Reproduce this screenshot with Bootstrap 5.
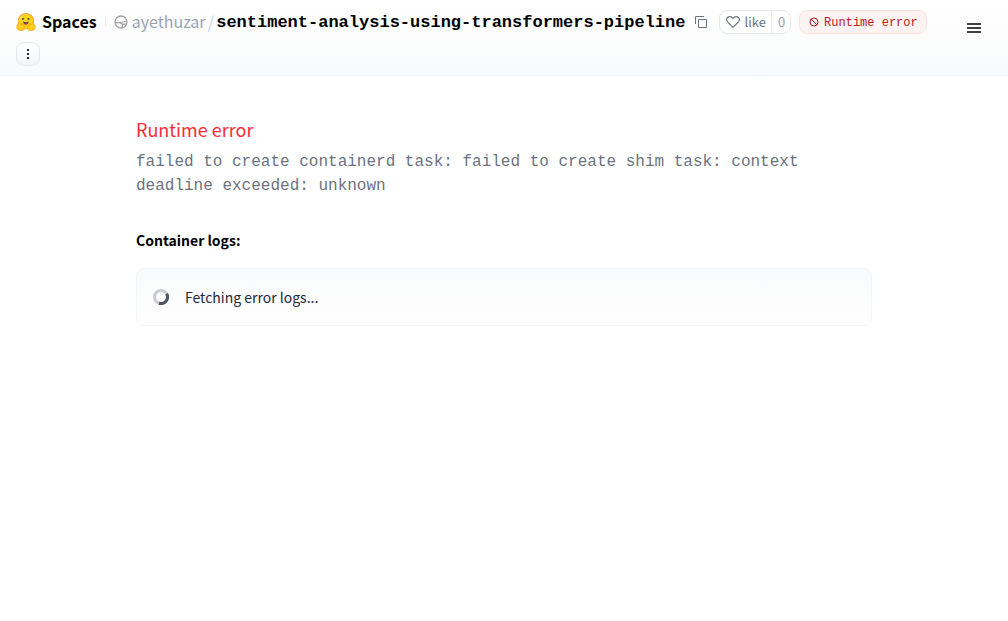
<!DOCTYPE html>
<html lang="en">
<head>
<meta charset="utf-8">
<meta name="viewport" content="width=device-width, initial-scale=1">
<title>sentiment-analysis-using-transformers-pipeline</title>
<link href="https://cdn.jsdelivr.net/npm/bootstrap@5.3.0/dist/css/bootstrap.min.css" rel="stylesheet">
<style>
  body { font-family: "Noto Sans CJK SC", "Noto Sans", sans-serif; font-size: 14px; line-height: 24px; color: #1f2937; }
  svg { display: block; flex-shrink: 0; }
  .mono { font-family: "Liberation Mono", monospace; }
  .space-header { background: linear-gradient(to top, #f9fafb, #fff); border-bottom: 1px solid #f3f4f6; padding: 10px 16px 9px; }
  .space-bar { row-gap: 8px; min-width: 0; }
  .space-bar a { text-decoration: none; }
  .brand { color: #000; font-size: 16px; font-weight: 700; gap: 6px; }
  .brand span, .owner { line-height: 22px; padding-bottom: 2px; }
  .divider { width: 1px; height: 8px; background: #e5e7eb; margin: 0 8px; }
  .owner { color: #9ca3af; font-size: 16px; margin-left: 4px; }
  .slash { color: #d1d5db; font-size: 17px; margin: 0 2px; }
  .space-name { color: #000; font-size: 17px; line-height: 22px; padding-top: 2px; font-weight: 700; }
  .bare-btn { border: 0; background: none; padding: 0; color: #6b7280; }
  .copy-btn { margin-left: 10px; }
  .like-box { height: 24px; border: 1px solid #e5e7eb; border-radius: 8px; background: #fff; font-size: 13px; line-height: 22px; margin: 0 8px 0 12px; overflow: hidden; }
  .like-box button { border: 0; background: none; padding: 0 5px 0 6px; color: #6b7280; }
  .like-box .count { border-left: 1px solid #e5e7eb; color: #9ca3af; }
  .status { height: 24px; border: 1px solid #fee2e2; border-radius: 8px; background: #fef2f2; color: #b91c1c; font-size: 12px; padding: 0 8px 0 9px; gap: 5px; margin-right: 8px; }
  .status span { line-height: 20px; padding-top: 2px; }
  .more-btn { width: 24px; height: 24px; border: 1px solid #e5e7eb; border-radius: 8px; background: linear-gradient(#fff, #f3f4f6); color: #1f2937; padding: 0; }
  .menu-btn { width: 36px; height: 36px; color: #374151; }
  .space-main { max-width: 768px; padding: 40px 16px; }
  .error-title { color: #fb2c36; font-size: 18px; line-height: 26px; margin-bottom: 8px; }
  .error-text { color: #6b7280; font-size: 16px; line-height: 24px; margin-bottom: 30px; }
  .logs-title { color: #000; font-size: 14px; line-height: 24px; font-weight: 700; margin-bottom: 16px; }
  .logs-box { border: 1px solid #f3f4f6; border-radius: 8px; background: linear-gradient(#f9fafb, #fff); padding: 16px; gap: 16px; }
</style>
</head>
<body>
<header class="space-header d-flex align-items-start justify-content-between">
  <div class="space-bar d-flex flex-wrap align-items-center flex-grow-1">
    <a href="#" class="brand d-flex align-items-center">
      <svg width="20" height="20" viewBox="0 0 95 88" aria-hidden="true">
        <path fill="#FFD21E" d="M47.2 76.7a34.8 34.8 0 1 0 0-69.5 34.8 34.8 0 0 0 0 69.5Z"/>
        <path fill="#FF9D0B" d="M82 42a34.8 34.8 0 1 0-69.6 0 34.8 34.8 0 0 0 69.5 0Zm-73.5 0a38.8 38.8 0 1 1 77.5 0 38.8 38.8 0 0 1-77.5 0Z"/>
        <path fill="#3A3B45" d="M58.5 32.3c1.3.5 1.8 3 3 2.3a5 5 0 1 0-6.7-2c.6 1.1 2.6-.7 3.7-.3ZM35 32.3c-1.2.5-1.8 3-3.1 2.3a5 5 0 1 1 6.8-2c-.6 1.1-2.6-.7-3.7-.3Z"/>
        <path fill="#3A3B45" d="M47 56c9.8 0 13-8.8 13-13.3 0-2.3-1.6-1.6-4.1-.4-2.3 1.2-5.4 2.8-9 2.8-7.3 0-13-6.8-13-2.4 0 4.4 3.2 13.3 13 13.3Z"/>
        <path fill="#F94040" d="M39.4 54a8.7 8.7 0 0 1 5.3-4.5c.4-.1.8.6 1.2 1.3.4.6.8 1.1 1.1 1.1.4 0 .8-.6 1.2-1.2.4-.7.8-1.3 1.2-1.2a8.6 8.6 0 0 1 5 4.2C52 56 49 56.3 47 56.3S42 56 39.4 54Z"/>
        <path fill="#FFD21E" stroke="#FF9D0B" stroke-width="4" stroke-linejoin="round" d="M17 49c-5-1-7 3-5 8-6-2-9 3-6 8-4 3-4 7 0 9-1 8 13 11 23 10 10-1 16-10 9-19-4-6-6-15-11-13-2 1-1 6 0 8-3-4-6-9-10-11ZM78 49c5-1 7 3 5 8 6-2 9 3 6 8 4 3 4 7 0 9 1 8-13 11-23 10-10-1-16-10-9-19 4-6 6-15 11-13 2 1 1 6 0 8 3-4 6-9 10-11Z"/>
      </svg>
      <span>Spaces</span>
    </a>
    <span class="divider"></span>
    <svg width="14" height="14" viewBox="0 0 14 14" fill="none" stroke="#a3a3a3" stroke-width="1.300" aria-hidden="true">
      <circle cx="7" cy="7" r="6"/><path d="M1 7.500c4 .3 8-.3 12-1.500M5.500 7.400l3 2 4.200-.4M8.500 9.400l-.6 3.400"/>
    </svg>
    <a href="#" class="owner">ayethuzar</a>
    <span class="slash">/</span>
    <a href="#" class="space-name mono">sentiment-analysis-using-transformers-pipeline</a>
    <button type="button" class="bare-btn copy-btn" aria-label="Copy space name">
      <svg width="12" height="12" viewBox="0 0 12 12" fill="none" stroke="currentColor"><path d="M3.500 3.500h8v8h-8zM.5 8V.5H9"/></svg>
    </button>
    <div class="like-box d-flex">
      <button type="button" class="d-flex align-items-center gap-1">
        <svg width="14" height="14" viewBox="0 0 14 14" fill="none" stroke="currentColor" stroke-width="1.100" aria-hidden="true"><path d="M7 12.300 1.700 7C.4 5.600.4 3.700 1.600 2.500s3.300-1.200 4.600.1L7 3.500l.8-.9c1.300-1.300 3.400-1.300 4.600-.1s1.200 3.100-.1 4.500z"/></svg>
        <span>like</span>
      </button>
      <button type="button" class="count" aria-label="See who liked this space">0</button>
    </div>
    <div class="status mono d-flex align-items-center">
      <svg width="10" height="10" viewBox="0 0 10 10" fill="none" stroke="currentColor" aria-hidden="true"><circle cx="5" cy="5" r="4"/><path d="m2.200 2.200 5.600 5.600"/></svg>
      <span>Runtime error</span>
    </div>
    <button type="button" class="more-btn d-flex align-items-center justify-content-center" aria-label="More options">
      <svg width="4" height="10" viewBox="0 0 4 10" fill="currentColor"><path d="M1 0h2v2H1zM1 4h2v2H1zM1 8h2v2H1z"/></svg>
    </button>
  </div>
  <button type="button" class="bare-btn menu-btn d-flex align-items-center justify-content-center flex-shrink-0" aria-label="Open menu">
    <svg width="14" height="10" viewBox="0 0 14 10" fill="#404040"><path d="M0 0h14v2H0zM0 4h14v2H0zM0 8h14v2H0z"/></svg>
  </button>
</header>
<main class="space-main container-fluid mx-auto">
  <h2 class="error-title fw-normal">Runtime error</h2>
  <p class="error-text mono">failed to create containerd task: failed to create shim task: context deadline exceeded: unknown</p>
  <h3 class="logs-title">Container logs:</h3>
  <div class="logs-box d-flex align-items-center" role="status">
    <svg width="16" height="16" viewBox="0 0 16 16" fill="none" stroke-width="3" aria-hidden="true"><circle cx="8" cy="8" r="6.500" stroke="#c9cbd0"/><path stroke="#4b5563" d="M13.600 4.700A6.500 6.500 0 0 1 6 14.200"/></svg>
    <span>Fetching error logs...</span>
  </div>
</main>
<script src="https://cdn.jsdelivr.net/npm/bootstrap@5.3.0/dist/js/bootstrap.bundle.min.js"></script>
</body>
</html>
